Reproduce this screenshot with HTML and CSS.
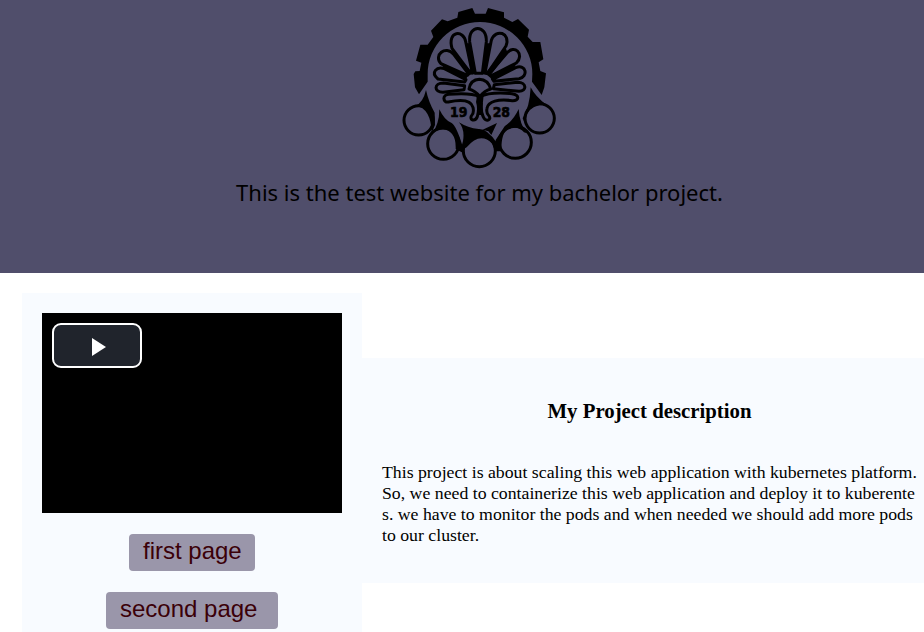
FILE: index.html
```html
<!DOCTYPE html>
<html lang="en">
<head>
<meta charset="utf-8">
<title>Bachelor project</title>
<link rel="stylesheet" href="styles.css">
</head>
<body>
<header class="banner">
  <svg class="logo" viewBox="0 0 510 525" role="img" aria-label="University emblem">
    <path d="M72 283L60 262L56 222L61 214L74 213L79 188L63 182L76 134L98 134L115 111L108 92L141 58L158 64L187 53L190 36L232 24L240 41H272L279 24L327 37V53L352 66L369 57L402 89L398 110L413 126L436 126L445 178L431 187L436 213L453 220L448 262L440 285L411 245L412 222A157 156 0 0 0 98 222V245Z"/>
    <g class="line">
      <path d="M241 220L224 125C220 72 276 72 274 125L262 220Z"/>
      <path d="M226 219L171 145C156 90 207 90 212 125L232 219Z"/>
      <path d="M270 219L289 121C302 84 348 98 333 138L277 221Z"/>
      <path d="M217 226L138 191C114 166 152 134 176 163L221 222Z"/>
      <path d="M281 223L335 160C358 130 390 164 364 189L287 228Z"/>
      <path d="M209 246L129 237C105 217 126 198 148 206L213 239Z"/>
      <path d="M293 238L362 203C394 190 401 231 372 236L297 244Z"/>
      <path d="M209 257L145 249C116 249 116 277 144 277L207 269Z"/>
      <path d="M298 254L368 247C396 247 396 274 372 274L295 266Z"/>
      <path d="M222 267Q227 239 253 238Q279 239 287 267Q268 272 255 290Q240 272 222 267Z"/>
      <path d="M255 290Q225 277 162 283C140 284 144 309 160 306Q226 292 234 322Q238 340 229 348C223 360 240 367 247 350Q253 330 249 311Q245 300 255 290Q285 275 351 281C375 285 373 303 352 302C310 296 279 304 276 325Q273 340 282 348C291 360 272 367 265 351Q257 336 259 309"/>
    </g>
    <path d="M213 130H224L242 223H229ZM276 130H288L272 223H260ZM170 148L178 160L224 226L232 218ZM332 144L338 158L285 228L270 221ZM138 194L150 206L212 240L220 224ZM363 192L357 206L290 240L282 226ZM244 285H266L260 345H248Z"/>
    <g class="rings">
      <circle cx="71" cy="361" r="44"/>
      <circle cx="434" cy="355" r="44"/>
      <circle cx="145" cy="431" r="47"/>
      <circle cx="361" cy="427" r="48"/>
      <circle cx="253" cy="452" r="48"/>
    </g>
    <path d="M93 270Q101 307 119 338L120 375L110 399Q108 324 62 317Q84 308 93 270ZM133 328Q149 362 170 369Q184 378 202 436L206 460L182 447Q184 392 143 388Q121 390 109 405Q133 374 133 328ZM192 367Q218 384 251 387Q277 386 304 427L318 420L319 454H300L292 431Q255 394 215 442L196 453L204 423Q210 388 192 367ZM263 389L306 369L289 405L280 394ZM371 327Q374 374 396 400L387 397Q368 375 338 388Q319 398 319 451L302 445V420L329 379Q356 360 371 327ZM407 262Q422 291 454 314Q411 313 397 341L389 368L383 355Q404 322 407 262Z"/>
    <text class="year" x="165" y="350" textLength="52" lengthAdjust="spacingAndGlyphs">19</text>
    <text class="year" x="293" y="350" textLength="52" lengthAdjust="spacingAndGlyphs">28</text>
  </svg>
  <p class="tagline">This is the test website for my bachelor project.</p>
</header>
<main class="content">
  <section class="media">
    <div class="video">
      <button class="play" aria-label="Play"><svg class="play-icon" viewBox="0 0 14 18"><path d="M0 0L14 9L0 18Z"/></svg></button>
    </div>
    <a class="page-link first">first page</a>
    <a class="page-link second">second page</a>
  </section>
  <section class="description">
    <h1>My Project description</h1>
    <p>This project is about scaling this web application with kubernetes platform. So, we need to containerize this web application and deploy it to kuberentes. we have to monitor the pods and when needed we should add more pods to our cluster.</p>
  </section>
</main>
</body>
</html>
```
FILE: styles.css
```css
* { box-sizing: border-box; }
body { margin: 0; background: #fff; overflow: hidden; }
.banner {
  height: 273px;
  padding-left: 35px;
  background: #504e6b;
  display: flex;
  flex-direction: column;
  align-items: center;
}
.logo { width: 170px; height: 175px; flex: none; }
.line { fill: none; stroke: #000; stroke-width: 9; stroke-linejoin: round; }
.rings { fill: none; stroke: #000; stroke-width: 9; }
.year { font: bold 44px "DejaVu Sans", sans-serif; stroke: #000; stroke-width: 2; }
.tagline {
  margin: 1px 0 0;
  font: 22px/32px "Noto Sans", sans-serif;
  white-space: nowrap;
}
.content { display: flex; align-items: center; height: 359px; padding-left: 22px; }
.media {
  align-self: flex-start;
  flex: none;
  width: 340px;
  height: 339px;
  margin-top: 20px;
  padding-top: 20px;
  background: #f8fbff;
  display: flex;
  flex-direction: column;
  align-items: center;
}
.video { width: 300px; height: 200px; flex: none; padding: 10px; background: #000; margin-bottom: 21px; }
.play {
  display: flex;
  align-items: center;
  justify-content: center;
  width: 90px;
  height: 45px;
  padding: 3px 0 0 3px;
  border: 2px solid #fff;
  border-radius: 9px;
  background: #20242c;
}
.play-icon { width: 14px; height: 18px; fill: #fff; }
.page-link {
  flex: none;
  height: 37px;
  padding-left: 14px;
  border-radius: 4px;
  background: #9a96aa;
  color: #3b0008;
  font: 24px/33px "Liberation Sans", sans-serif;
}
.first { width: 126px; margin-bottom: 21px; }
.second { width: 172px; }
.description {
  flex: none;
  width: 575px;
  height: 225px;
  margin-top: 36px;
  padding: 40px 20px 0;
  background: #f8fbff;
  font-family: "Liberation Serif", serif;
}
.description h1 { margin: 0 0 39px; font-size: 20.8px; line-height: 25px; text-align: center; }
.description p { margin: 0; font-size: 17.76px; line-height: 21px; word-break: break-all; }
```
